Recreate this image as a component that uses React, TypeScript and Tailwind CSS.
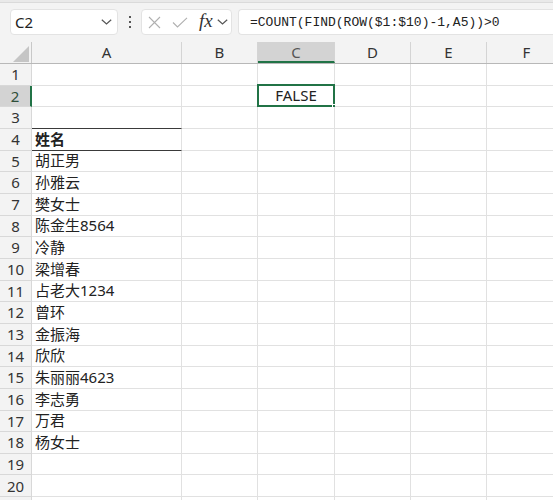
import React from "react";

const G = "#217346";
const names = ["胡正男", "孙雅云", "樊女士", "陈金生8564", "冷静", "梁增春", "占老大1234", "曾环", "金振海", "欣欣", "朱丽丽4623", "李志勇", "万君", "杨女士"];
const cols = [
  { k: "A", w: "w-[150px]" },
  { k: "B", w: "w-[76px]" },
  { k: "C", w: "w-[77px]" },
  { k: "D", w: "w-[76px]" },
  { k: "E", w: "w-[76px]" },
  { k: "F", w: "w-[80px]" },
];

function Chevron({ className }: { className?: string }) {
  return (
    <svg className={className} width="11" height="6" viewBox="0 0 11 6" fill="none">
      <path d="M0.8 0.8 L5.5 5 L10.2 0.8" stroke="#555" strokeWidth="1.2" />
    </svg>
  );
}

function cellText(r: number, c: string) {
  if (c === "A") {
    if (r === 4) return <span className="font-bold">姓名</span>;
    if (r >= 5 && r <= 18) return names[r - 5];
  }
  return null;
}

export default function App() {
  const rows = Array.from({ length: 21 }, (_, i) => i + 1);
  return (
    <div
      className="w-[553px] h-[500px] overflow-hidden bg-[#f3f3f3] text-[#222]"
      style={{ fontFamily: '"Noto Sans", "Noto Sans CJK SC", sans-serif' }}
    >
      <div className="h-[3px] bg-[#e9e9e9] border-b border-[#dadada]" />
      {/* toolbar */}
      <div className="h-[39px] flex items-start pt-[6px] pl-[10px]">
        <div className="w-[108px] h-[26px] bg-white rounded-[4px] border border-[#e3e3e3] flex items-center pl-[4px] pr-[5px]">
          <span className="text-[15px] leading-none flex-1">C2</span>
          <Chevron />
        </div>
        <div className="w-[23px] h-[26px] flex flex-col items-center justify-center gap-[3px]">
          <div className="w-[2px] h-[2px] bg-[#555]" />
          <div className="w-[2px] h-[2px] bg-[#555]" />
          <div className="w-[2px] h-[2px] bg-[#555]" />
        </div>
        <div className="w-[91px] h-[26px] bg-white rounded-[4px] border border-[#e3e3e3] flex items-center pl-[6px]">
          <svg width="13" height="13" viewBox="0 0 13 13">
            <path d="M1 1 L12 12 M12 1 L1 12" stroke="#b0b0b0" strokeWidth="1.1" />
          </svg>
          <svg width="16" height="11" viewBox="0 0 16 11" className="ml-[11px]">
            <path d="M1 5.5 L5.5 10 L15 0.8" stroke="#b0b0b0" strokeWidth="1.1" fill="none" />
          </svg>
          <span
            className="ml-[11px] text-[19px] italic leading-none text-[#333] -mt-[3px]"
            style={{ fontFamily: '"Liberation Serif", serif' }}
          >
            fx
          </span>
          <Chevron className="ml-[4px]" />
        </div>
        <div className="ml-[6px] flex-1 h-[26px] bg-white rounded-l-[4px] border border-r-0 border-[#e3e3e3] flex items-center pl-[11px]">
          <span className="text-[13px] leading-none text-[#222]" style={{ fontFamily: '"Liberation Mono", monospace' }}>
            =COUNT(FIND(ROW($1:$10)-1,A5))&gt;0
          </span>
        </div>
      </div>
      {/* column header */}
      <div className="flex h-[22px] border-b border-[#b8b8b8]">
        <div className="w-[32px] shrink-0 border-r border-[#c8c8c8] relative">
          <svg width="17" height="16" viewBox="0 0 17 16" className="absolute left-[13px] top-[4px]">
            <path d="M16 0 L16 16 L0 16 Z" fill="#c5c5c5" />
          </svg>
        </div>
        {cols.map((c) => (
          <div
            key={c.k}
            className={`${c.w} shrink-0 flex items-center justify-center text-[15px] border-r border-[#d4d4d4] ${
              c.k === "C" ? "bg-[#d3d3d3] border-b-2 border-b-[#217346] text-[#555] pt-[2px]" : "text-[#333]"
            }`}
          >
            {c.k}
          </div>
        ))}
      </div>
      {/* rows */}
      {rows.map((r) => (
        <div key={r} className="flex h-[21.67px]">
          <div
            className={`w-[32px] shrink-0 flex items-center justify-center text-[15px] border-b border-[#d8d8d8] ${
              r === 2 ? "bg-[#d3d3d3] border-r-2 border-r-[#217346] text-[#2f4f3a]" : "border-r border-[#c8c8c8] text-[#333]"
            }`}
          >
            {r <= 20 ? r : ""}
          </div>
          {cols.map((c) => {
            const darkBottom = c.k === "A" && (r === 3 || r === 4);
            const sel = c.k === "C" && r === 2;
            return (
              <div
                key={c.k}
                className={`${c.w} shrink-0 relative bg-white border-r border-[#e1e1e1] flex items-center text-[15px] leading-none ${
                  darkBottom ? "border-b border-b-[#3a3a3a]" : "border-b border-[#e1e1e1]"
                } ${sel ? "justify-center" : "pl-[3px]"}`}
              >
                {darkBottom && <div className="absolute left-0 right-0 bottom-[-2px] h-[1px] bg-[#9a9a9a]" />}
                {sel ? (
                  <>
                    <span>FALSE</span>
                    <div className="absolute left-[-1px] top-[-2px] right-[-1px] bottom-[-1px] border-2" style={{ borderColor: G }} />
                    <div className="absolute right-[-3px] bottom-[-3px] w-[5px] h-[5px] border border-white" style={{ background: G }} />
                  </>
                ) : (
                  cellText(r, c.k)
                )}
              </div>
            );
          })}
        </div>
      ))}
    </div>
  );
}
